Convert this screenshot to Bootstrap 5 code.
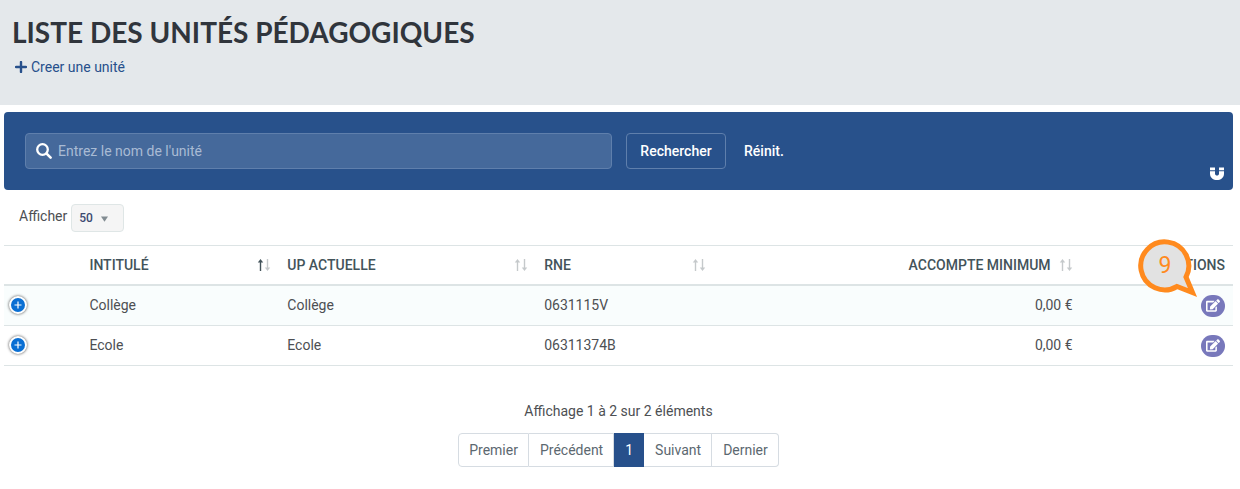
<!DOCTYPE html>
<html lang="fr">
<head>
<meta charset="utf-8">
<meta name="viewport" content="width=device-width, initial-scale=1">
<title>Liste des unités pédagogiques</title>
<link href="https://cdn.jsdelivr.net/npm/bootstrap@5.3.0/dist/css/bootstrap.min.css" rel="stylesheet">
<style>
  body { font-family: Roboto, "Liberation Sans", sans-serif; font-size: 14px; line-height: 20px; color: #4d4f53; background: #fff; }
  svg { display: block; flex: none; }
  .page-head { background: #e4e8eb; padding: 14px 12px 27px; }
  .page-head h1 { font: 700 28px/36px Lato, sans-serif; color: #30353c; margin: 0 0 7px; }
  .create-link { color: #27508b; gap: 4px; padding-left: 3px; }
  .main-area { padding: 7px 7px 16px 4px; }
  .search-panel { background: #28518b; border-radius: 4px; padding: 21px; gap: 14px; }
  .search-field { flex: 0 0 587px; max-width: 100%; height: 36px; background: #45699b; border: 1px solid #5f7fac; border-radius: 4px; padding: 0 10px; gap: 6px; }
  .search-field input, .search-field input:focus { background: transparent; border: 0; box-shadow: none; padding: 0; font-size: 14px; line-height: 20px; color: #fff; }
  .search-field input::placeholder { color: #a9bbd4; opacity: 1; }
  .btn-panel { --bs-btn-color: #fff; --bs-btn-border-color: #5f7fac; --bs-btn-hover-color: #fff; --bs-btn-hover-border-color: #fff; --bs-btn-padding-x: 13px; --bs-btn-padding-y: 7px; --bs-btn-font-size: 14px; --bs-btn-line-height: 20px; --bs-btn-border-radius: 4px; --bs-btn-font-weight: 500; min-width: 100px; }
  .btn-reset { --bs-btn-border-color: transparent; min-width: 0; --bs-btn-padding-x: 3px; }
  .btn-magnet { right: 8px; bottom: 8px; line-height: 1; }
  .length-bar { padding: 14px 15px 13px; gap: 4px; }
  .length-bar label { padding-top: 2px; }
  .length-bar select { width: 53px; height: 28px; padding: 0 7px; font-size: 12px; line-height: 20px; font-weight: 500; color: #3b4a70; border: 1px solid #dfe6e6; border-radius: 4px; background: #f5f5f5 url("data:image/svg+xml,%3Csvg xmlns='http://www.w3.org/2000/svg' viewBox='0 0 8 6'%3E%3Cpath d='M0 0h8L4 6z' fill='%23828c92'/%3E%3C/svg%3E") no-repeat 29px 11px / 7px 6px; }
  .units { table-layout: fixed; font-size: 14px; line-height: 20px; margin: 0; --bs-table-color: #4d4f53; color: #4d4f53; border-top: 1px solid #dde4e5; }
  .units > :not(caption) > * > * { padding: 9px 8px; border-bottom: 1px solid #dde4e5; vertical-align: middle; }
  .units > thead > tr > th { color: #43535a; font-weight: 500; border-bottom-width: 2px; }
  .units > tbody > tr > td { padding: 9px 8px 10px; }
  .units > tbody > tr:first-child > td { background: #f9fdfd; }
  .units .w-toggle { width: 6.3%; } .units .w-title { width: 16.1%; } .units .w-current { width: 20.9%; }
  .units .w-rne { width: 14.5%; } .units .w-amount { width: 29.8%; }
  .sorter { color: #c5c9cb; }
  .sorter .sorted { color: #43535a; }
  .row-toggle { width: 18px; height: 18px; padding: 0; border: 2px solid #fff; border-radius: 50%; background: #0a6fd3; box-shadow: 0 0 3px #444; margin: 0 0 0 -3px; }
  .btn-edit { width: 24px; height: 22px; padding: 0; border: 0; border-radius: 12px; background: #7878bb; }
  .callout-pin { right: 33px; top: -8px; z-index: 2; }
  .callout-pin text { font: 400 23px Roboto, sans-serif; fill: #ff8a1e; }
  .summary { margin: 35px 0 8px; }
  .pagination { --bs-pagination-padding-x: 10px; --bs-pagination-padding-y: 6px; --bs-pagination-font-size: 14px; --bs-pagination-color: #5c6870; --bs-pagination-border-color: #d6dce2; --bs-pagination-border-radius: 4px; --bs-pagination-active-bg: #27508b; --bs-pagination-active-border-color: #27508b; }
  .page-link { line-height: 20px; }
  .page-item:not(:first-child) .page-link { margin-left: 0; border-left: 0; padding-left: 11px; }
</style>
</head>
<body>
<svg class="d-none" xmlns="http://www.w3.org/2000/svg">
  <symbol id="sort" viewBox="0 0 14 14">
    <path d="M3.500 13V4" stroke="currentColor" stroke-width="1.400"/><path d="M.8 4.600 3.500 1l2.700 3.600z" fill="currentColor"/>
    <path d="M10.500 1v9" stroke="currentColor" stroke-width="1.400"/><path d="M7.800 9.400 10.500 13l2.700-3.600z" fill="currentColor"/>
  </symbol>
  <symbol id="edit" viewBox="0 0 576 512"><path fill="#fff" d="M402.6 83.2l90.2 90.2c3.800 3.800 3.800 10 0 13.800L274.400 405.600l-92.800 10.300c-12.400 1.400-22.900-9.100-21.500-21.500l10.300-92.800L388.800 83.200c3.800-3.800 10-3.800 13.800 0zm162-22.900l-48.800-48.800c-15.200-15.200-39.900-15.200-55.200 0l-35.400 35.400c-3.800 3.800-3.800 10 0 13.800l90.200 90.200c3.800 3.800 10 3.800 13.800 0l35.400-35.400c15.200-15.300 15.200-40 0-55.200zM384 346.200V448H64V128h229.800c3.200 0 6.200-1.300 8.500-3.500l40-40c7.600-7.600 2.200-20.500-8.500-20.500H48C21.500 64 0 85.500 0 112v352c0 26.500 21.500 48 48 48h352c26.500 0 48-21.500 48-48V306.200c0-10.700-12.900-16-20.500-8.500l-40 40c-2.200 2.300-3.500 5.300-3.500 8.500z"/></symbol>
  <symbol id="plus" viewBox="0 0 14 14"><path d="M7 3.500v7M3.500 7h7" stroke="#fff" stroke-width="1.200"/></symbol>
</svg>

<header class="page-head">
  <h1 class="text-uppercase">Liste des unités pédagogiques</h1>
  <a href="#" class="create-link d-inline-flex align-items-center text-decoration-none">
    <svg width="12" height="12" viewBox="0 0 12 12" aria-hidden="true"><path d="M6 1v10M1 6h10" stroke="currentColor" stroke-width="2.400" stroke-linecap="round"/></svg>
    <span>Creer une unité</span>
  </a>
</header>

<main class="main-area">
  <form class="search-panel d-flex flex-wrap align-items-center position-relative">
    <div class="search-field d-flex align-items-center">
      <svg width="16" height="16" viewBox="0 0 16 16" aria-hidden="true"><circle cx="6.500" cy="6.500" r="5.300" fill="none" stroke="#fff" stroke-width="2.300"/><path d="m10.600 10.600 4 4" stroke="#fff" stroke-width="2.600" stroke-linecap="round"/></svg>
      <input type="text" class="form-control" placeholder="Entrez le nom de l'unité" aria-label="Nom de l'unité">
    </div>
    <button type="button" class="btn btn-panel">Rechercher</button>
    <button type="reset" class="btn btn-panel btn-reset">Réinit.</button>
    <button type="button" class="btn-magnet btn p-0 border-0 position-absolute" aria-label="Épingler">
      <svg width="16" height="16" viewBox="0 0 16 16" aria-hidden="true"><path fill="#fff" d="M1 1.500h5v2.700H1zM10 1.500h5v2.700h-5zM1 5.200h5v2.600c0 2.400 4 2.400 4 0V5.200h5v2.600c0 8.400-14 8.400-14 0z"/></svg>
    </button>
  </form>

  <div class="length-bar d-flex">
    <label for="page-size">Afficher</label>
    <select id="page-size" class="form-select"><option>50</option><option>100</option></select>
  </div>

  <table class="table units">
    <thead>
      <tr>
        <th class="w-toggle"></th>
        <th class="w-title"><div class="d-flex justify-content-between align-items-center">INTITULÉ
          <svg class="sorter" width="14" height="14" viewBox="0 0 14 14" aria-hidden="true"><g class="sorted"><path d="M3.500 13V4" stroke="currentColor" stroke-width="1.400"/><path d="M.8 4.600 3.500 1l2.700 3.600z" fill="currentColor"/></g><path d="M10.500 1v9" stroke="currentColor" stroke-width="1.400"/><path d="M7.800 9.400 10.500 13l2.700-3.600z" fill="currentColor"/></svg></div></th>
        <th class="w-current"><div class="d-flex justify-content-between align-items-center">UP ACTUELLE <svg class="sorter" width="14" height="14" aria-hidden="true"><use href="#sort"/></svg></div></th>
        <th class="w-rne"><div class="d-flex justify-content-between align-items-center">RNE <svg class="sorter" width="14" height="14" aria-hidden="true"><use href="#sort"/></svg></div></th>
        <th class="w-amount"><div class="d-flex justify-content-end align-items-center gap-2">ACCOMPTE MINIMUM <svg class="sorter" width="14" height="14" aria-hidden="true"><use href="#sort"/></svg></div></th>
        <th class="text-end position-relative">ACTIONS
          <svg class="callout-pin position-absolute" width="62" height="62" viewBox="0 0 62 62"><path d="M39 48.500A24 24 0 1 1 48 39L54.500 54.500z" fill="#e2e2e2" stroke="#ff8a1e" stroke-width="5"/><text x="27" y="35" text-anchor="middle">9</text></svg>
        </th>
      </tr>
    </thead>
    <tbody>
      <tr>
        <td><button type="button" class="row-toggle d-block" aria-label="Détails de Collège"><svg width="14" height="14" aria-hidden="true"><use href="#plus"/></svg></button></td>
        <td>Collège</td><td>Collège</td><td>0631115V</td><td class="text-end">0,00 €</td>
        <td class="py-0"><button type="button" class="btn-edit d-flex align-items-center justify-content-center ms-auto" aria-label="Modifier Collège"><svg width="14" height="13" aria-hidden="true"><use href="#edit"/></svg></button></td>
      </tr>
      <tr>
        <td><button type="button" class="row-toggle d-block" aria-label="Détails de Ecole"><svg width="14" height="14" aria-hidden="true"><use href="#plus"/></svg></button></td>
        <td>Ecole</td><td>Ecole</td><td>06311374B</td><td class="text-end">0,00 €</td>
        <td class="py-0"><button type="button" class="btn-edit d-flex align-items-center justify-content-center ms-auto" aria-label="Modifier Ecole"><svg width="14" height="13" aria-hidden="true"><use href="#edit"/></svg></button></td>
      </tr>
    </tbody>
  </table>

  <p class="summary text-center">Affichage 1 à 2 sur 2 éléments</p>
  <nav class="pt-1" aria-label="Pagination">
    <ul class="pagination justify-content-center m-0">
      <li class="page-item"><a class="page-link" href="#">Premier</a></li>
      <li class="page-item"><a class="page-link" href="#">Précédent</a></li>
      <li class="page-item active"><a class="page-link" href="#" aria-current="page">1</a></li>
      <li class="page-item"><a class="page-link" href="#">Suivant</a></li>
      <li class="page-item"><a class="page-link" href="#">Dernier</a></li>
    </ul>
  </nav>
</main>
<script src="https://cdn.jsdelivr.net/npm/bootstrap@5.3.0/dist/js/bootstrap.bundle.min.js"></script>
</body>
</html>
